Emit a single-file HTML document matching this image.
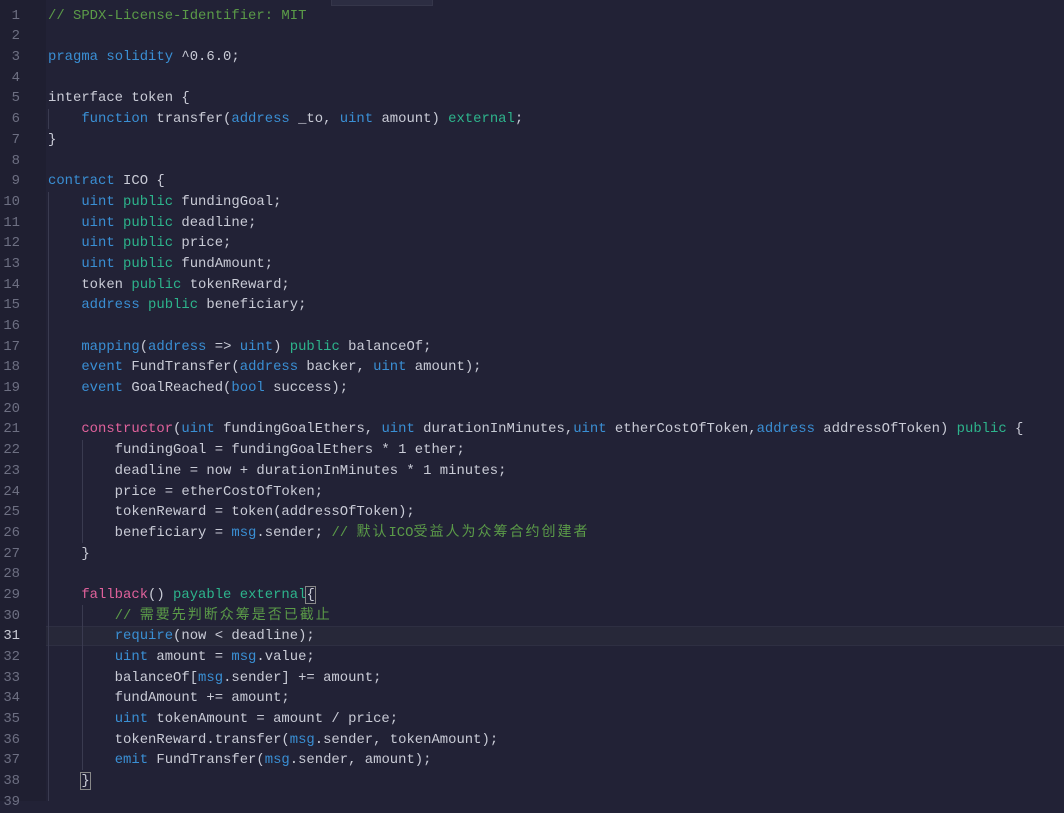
<!DOCTYPE html>
<html><head><meta charset="utf-8"><style>
html,body{margin:0;padding:0;width:1064px;height:801px;overflow:hidden;background:#222236;}
.g{position:absolute;left:0;top:0;width:46px;height:801px;background:#1f1f31;}
.strip{position:absolute;left:331px;top:0;width:102px;height:6px;background:#2c2d42;border:1px solid #35364a;border-top:none;box-sizing:border-box}
.code{position:absolute;left:0;top:5.7px;width:1064px;font-family:"Liberation Mono",monospace;font-size:13.9px;line-height:20.68px;color:#c9cbd6;white-space:pre;}
.ln{position:absolute;left:0;top:0;width:20px;text-align:right;color:#6d6f82;}
.tx{position:absolute;left:48px;top:0;}
.k{color:#3a8fd4}.p{color:#2db48c}.f{color:#e0619b}.c{color:#5b9b48}
.j{font-family:"Noto Sans CJK SC",sans-serif;font-size:14px;letter-spacing:2px;line-height:1;}
.ig{position:absolute;width:1px;background:#3a3b50}
.cur{position:absolute;left:46px;width:1018px;top:626px;height:20px;background:#272839;border-top:1px solid #2e2f42;border-bottom:1px solid #2e2f42;box-sizing:border-box}
.br{outline:1px solid #888;}
</style></head><body>
<div class="g"></div>
<div class="strip"></div>
<div class="cur"></div>
<div class="ig" style="left:48px;top:109px;height:20px"></div>
<div class="ig" style="left:48px;top:192px;height:609px"></div>
<div class="ig" style="left:82px;top:440px;height:103px"></div>
<div class="ig" style="left:82px;top:605px;height:165px"></div>
<div class="code"><div class="ln">1
2
3
4
5
6
7
8
9
10
11
12
13
14
15
16
17
18
19
20
21
22
23
24
25
26
27
28
29
30
<span style="color:#c9cbd6">31</span>
32
33
34
35
36
37
38
39</div><div class="tx"><span class="c">// SPDX-License-Identifier: MIT</span>

<span class="k">pragma</span> <span class="k">solidity</span> ^0.6.0;

interface token {
    <span class="k">function</span> transfer(<span class="k">address</span> _to, <span class="k">uint</span> amount) <span class="p">external</span>;
}

<span class="k">contract</span> ICO {
    <span class="k">uint</span> <span class="p">public</span> fundingGoal;
    <span class="k">uint</span> <span class="p">public</span> deadline;
    <span class="k">uint</span> <span class="p">public</span> price;
    <span class="k">uint</span> <span class="p">public</span> fundAmount;
    token <span class="p">public</span> tokenReward;
    <span class="k">address</span> <span class="p">public</span> beneficiary;

    <span class="k">mapping</span>(<span class="k">address</span> =&gt; <span class="k">uint</span>) <span class="p">public</span> balanceOf;
    <span class="k">event</span> FundTransfer(<span class="k">address</span> backer, <span class="k">uint</span> amount);
    <span class="k">event</span> GoalReached(<span class="k">bool</span> success);

    <span class="f">constructor</span>(<span class="k">uint</span> fundingGoalEthers, <span class="k">uint</span> durationInMinutes,<span class="k">uint</span> etherCostOfToken,<span class="k">address</span> addressOfToken) <span class="p">public</span> {
        fundingGoal = fundingGoalEthers * 1 ether;
        deadline = now + durationInMinutes * 1 minutes;
        price = etherCostOfToken;
        tokenReward = token(addressOfToken);
        beneficiary = <span class="k">msg</span>.sender; <span class="c">// <span class="j">默认</span>ICO<span class="j">受益人为众筹合约创建者</span></span>
    }

    <span class="f">fallback</span>() <span class="p">payable</span> <span class="p">external</span><span class="br">{</span>
        <span class="c">// <span class="j">需要先判断众筹是否已截止</span></span>
        <span class="k">require</span>(now &lt; deadline);
        <span class="k">uint</span> amount = <span class="k">msg</span>.value;
        balanceOf[<span class="k">msg</span>.sender] += amount;
        fundAmount += amount;
        <span class="k">uint</span> tokenAmount = amount / price;
        tokenReward.transfer(<span class="k">msg</span>.sender, tokenAmount);
        <span class="k">emit</span> FundTransfer(<span class="k">msg</span>.sender, amount);
    <span class="br">}</span></div></div>
</body></html>
